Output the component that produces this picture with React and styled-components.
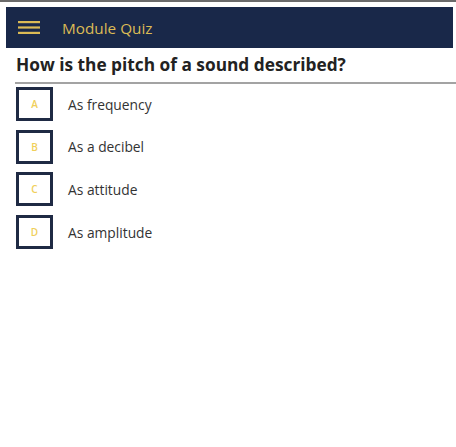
import React from 'react';
import styled, { createGlobalStyle } from 'styled-components';

const GlobalStyle = createGlobalStyle`
  html, body {
    margin: 0;
    padding: 0;
    background: #ffffff;
  }
  body {
    font-family: "Open Sans", Arial, sans-serif;
  }
`;

const Page = styled.div`
  border-top: 2px solid #6b6b6b;
  padding-top: 5px;
  min-height: 440px;
`;

const Header = styled.header`
  margin-left: 6px;
  margin-right: 3px;
  height: 41px;
  background: #192849;
  display: flex;
  align-items: center;
  padding-left: 12px;
  gap: 22px;
`;

const Menu = styled.svg`
  width: 22px;
  height: 13px;
  display: block;
`;

const Title = styled.h1`
  margin: 0;
  font-size: 15.3px;
  font-weight: 500;
  color: #dcbb55;
`;

const Question = styled.h2`
  margin: 0 0 0 15px;
  padding: 5px 0 6px 1px;
  font-size: 17.3px;
  font-weight: 700;
  color: #222222;
  border-bottom: 2px solid #a3a3a3;
`;

const Options = styled.ul`
  list-style: none;
  margin: 0;
  padding: 3px 0 0 16px;
  display: flex;
  flex-direction: column;
  gap: 8.7px;
`;

const Option = styled.li`
  display: flex;
  align-items: center;
  gap: 15px;
`;

const LetterBox = styled.span`
  box-sizing: border-box;
  width: 37px;
  height: 34px;
  border: 3px solid #1f2a44;
  display: flex;
  align-items: center;
  justify-content: center;
  font-size: 10px;
  font-weight: 600;
  color: #f0cf5a;
`;

const Label = styled.span`
  font-size: 13.8px;
  color: #333333;
`;

const options = [
  { letter: 'A', text: 'As frequency' },
  { letter: 'B', text: 'As a decibel' },
  { letter: 'C', text: 'As attitude' },
  { letter: 'D', text: 'As amplitude' },
];

export default function App() {
  return (
    <Page>
      <GlobalStyle />
      <Header>
        <Menu viewBox="0 0 22 13">
          <rect x="0" y="0" width="22" height="2.2" fill="#dcbb55" />
          <rect x="0" y="5.4" width="22" height="2.2" fill="#dcbb55" />
          <rect x="0" y="10.8" width="22" height="2.2" fill="#dcbb55" />
        </Menu>
        <Title>Module Quiz</Title>
      </Header>
      <Question>How is the pitch of a sound described?</Question>
      <Options>
        {options.map((o) => (
          <Option key={o.letter}>
            <LetterBox>{o.letter}</LetterBox>
            <Label>{o.text}</Label>
          </Option>
        ))}
      </Options>
    </Page>
  );
}
